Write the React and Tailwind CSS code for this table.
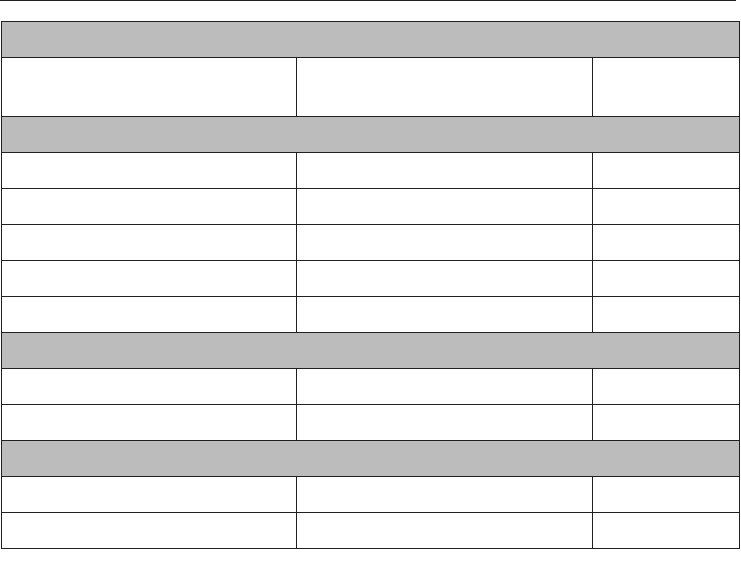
import React from 'react';

const sections = [
  { rows: 1, tall: true },
  { rows: 5 },
  { rows: 2 },
  { rows: 2 },
];

function Row({ tall, last }) {
  return (
    <div className={`flex ${tall ? 'h-[59px]' : last ? 'h-[35px]' : 'h-[36px]'} ${last ? '' : 'border-b border-[#231f20]'}`}>
      <div className="w-[295px] border-r border-[#231f20]" />
      <div className="w-[296px] border-r border-[#231f20]" />
      <div className="flex-1" />
    </div>
  );
}

export default function App() {
  return (
    <div className="w-[741px] h-[581px] bg-white" style={{ fontFamily: '"Liberation Sans", Arial, sans-serif' }}>
      <div className="h-px w-[736px] bg-[#231f20]" />
      <div className="ml-px mt-[20px] w-[739px] border border-[#231f20] box-border">
        {sections.map((s, si) => (
          <div key={si}>
            <div className="h-[36px] bg-[#bcbcbc] border-b border-[#231f20]" />
            {Array.from({ length: s.rows }).map((_, ri) => (
              <Row
                key={ri}
                tall={s.tall}
                last={si === sections.length - 1 && ri === s.rows - 1}
              />
            ))}
          </div>
        ))}
      </div>
    </div>
  );
}
